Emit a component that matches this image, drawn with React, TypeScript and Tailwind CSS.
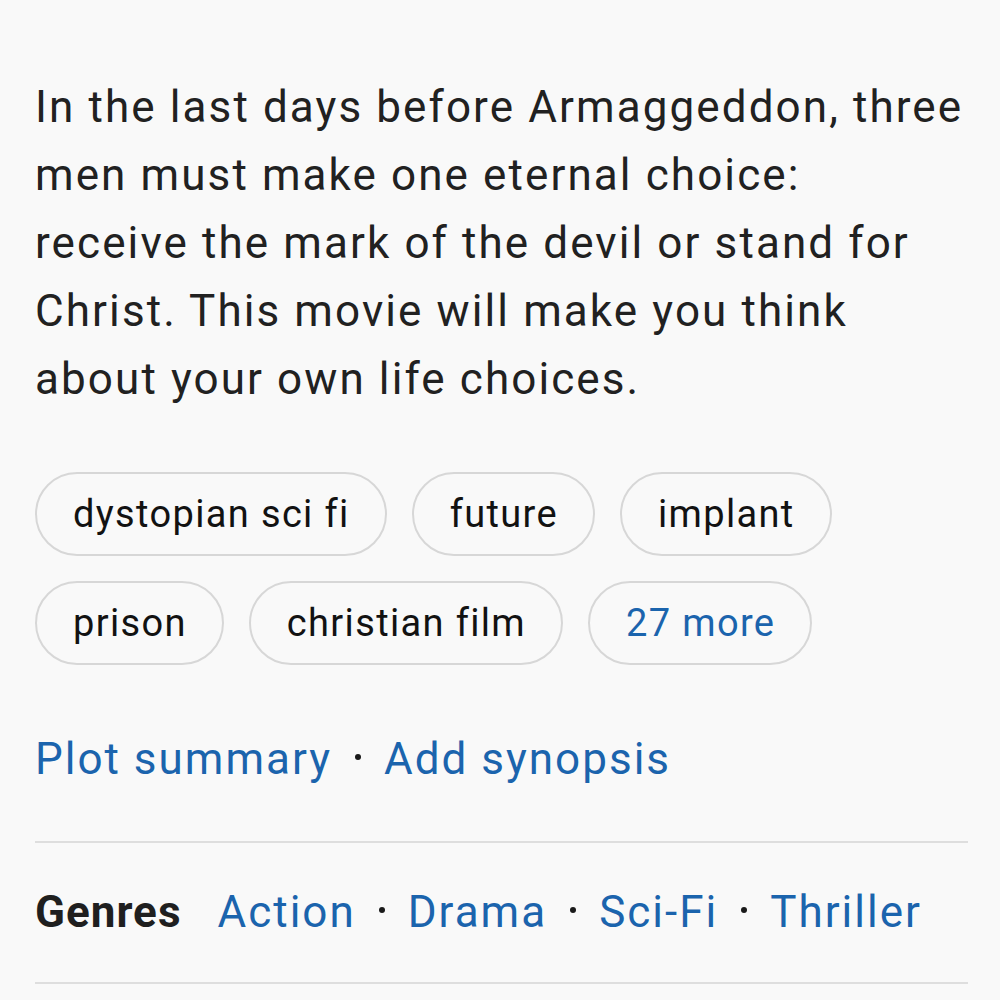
import React from 'react'

const tags = ['dystopian sci fi', 'future', 'implant', 'prison', 'christian film']
const genres = ['Action', 'Drama', 'Sci-Fi', 'Thriller']

function Dot() {
  return <span className="inline-block w-[6px] h-[6px] rounded-full bg-[#1a1a1a] mx-[23px] -translate-y-[14px]" />
}

export default function App() {
  return (
    <div className="min-h-[1000px] bg-[#f9f9f9] pl-[35px] pr-[32px] pt-[73px] pb-[20px] font-['Roboto',sans-serif]">
      <p className="text-[44px] leading-[68px] text-[#212121] tracking-[2.1px]">
        In the last days before Armaggeddon, three<br />
        men must make one eternal choice:<br />
        receive the mark of the devil or stand for<br />
        Christ. This movie will make you think<br />
        about your own life choices.
      </p>

      <div className="mt-[59px] flex flex-wrap gap-[25px]">
        {tags.map((t) => (
          <span key={t} className="h-[84px] pl-[36px] pr-[35px] flex items-center rounded-full border-2 border-[#d7d7d7] text-[38px] tracking-[1.35px] text-[#121212]">
            {t}
          </span>
        ))}
        <span className="h-[84px] pl-[36px] pr-[35px] flex items-center rounded-full border-2 border-[#d7d7d7] text-[38px] tracking-[1.35px] text-[#1b64ad]">
          27 more
        </span>
      </div>

      <div className="mt-[60px] flex items-baseline text-[44px] leading-[68px] tracking-[2px] text-[#1b64ad]">
        <span>Plot summary</span>
        <Dot />
        <span>Add synopsis</span>
      </div>

      <div className="mt-[48px] h-[2px] bg-[#dedede]" />

      <div className="mt-[35px] flex items-baseline text-[44px] leading-[68px] tracking-[2px]">
        <span className="font-bold tracking-[1px] text-[#1f1f1f] mr-[36px]">Genres</span>
        {genres.map((g, i) => (
          <React.Fragment key={g}>
            {i > 0 && <Dot />}
            <span className="text-[#1b64ad]">{g}</span>
          </React.Fragment>
        ))}
      </div>

      <div className="mt-[36px] h-[2px] bg-[#dedede]" />
    </div>
  )
}
